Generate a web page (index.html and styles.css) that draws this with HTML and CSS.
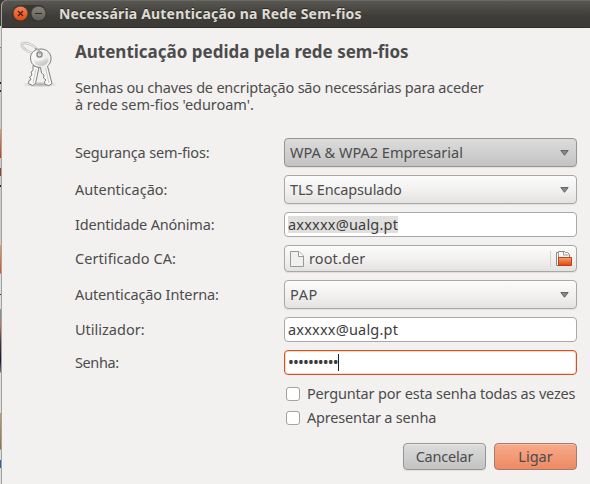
FILE: index.html
```html
<!DOCTYPE html>
<html lang="pt">
<head>
<meta charset="utf-8">
<title>Necessária Autenticação na Rede Sem-fios</title>
<link rel="stylesheet" href="styles.css">
</head>
<body>
<div class="desktop">
  <div class="behind"></div>
  <div class="window">
    <header class="titlebar">
      <div class="controls">
        <svg class="ctl" viewBox="0 0 15 15"><defs><linearGradient id="cl" x2="0" y2="1"><stop offset="0" stop-color="#f58457"/><stop offset="1" stop-color="#de4a12"/></linearGradient></defs><circle cx="7.5" cy="7.5" r="7.3" fill="url(#cl)" stroke="#35332e" stroke-width=".5"/><path d="M5 5l5 5M10 5l-5 5" stroke="#4a1d0c" stroke-width="1.2"/></svg>
        <svg class="ctl" viewBox="0 0 15 15"><defs><linearGradient id="mn" x2="0" y2="1"><stop offset="0" stop-color="#86847b"/><stop offset="1" stop-color="#625f57"/></linearGradient></defs><circle cx="7.5" cy="7.5" r="7.3" fill="url(#mn)" stroke="#35332e" stroke-width=".5"/><path d="M4 7.5h7" stroke="#302e29"/></svg>
      </div>
      <span class="title">Necessária Autenticação na Rede Sem-fios</span>
    </header>
    <main class="content">
      <svg class="keys" viewBox="0 0 48 48">
        <defs>
          <linearGradient id="metal" x2="1" y2="1"><stop offset="0" stop-color="#fff"/><stop offset=".5" stop-color="#ececea"/><stop offset="1" stop-color="#fff"/></linearGradient>
          <linearGradient id="face" x2="1" y2="1"><stop offset="0" stop-color="#f0f0ef"/><stop offset="1" stop-color="#bcbdbb"/></linearGradient>
          <radialGradient id="shade"><stop offset="0" stop-color="#aaa"/><stop offset="1" stop-color="#aaa" stop-opacity="0"/></radialGradient>
        </defs>
        <ellipse cx="23" cy="43.500" rx="18" ry="3" fill="url(#shade)"/>
        <ellipse cx="12.500" cy="7" rx="8.500" ry="3.600" transform="rotate(27 12.500 7)" fill="none" stroke="#b5b7b1" stroke-width="2.400"/>
        <ellipse cx="12.500" cy="7" rx="8.500" ry="3.600" transform="rotate(27 12.500 7)" fill="none" stroke="#f4f4f1" stroke-width="1"/>
        <path d="M16 24.500l6 2-3.500 16-3 2-4-2 .500-3 2-1-1.500-2.500 2.500-2-1-3 2-1.500z" fill="#f9f9f8" stroke="#80827e"/>
        <path d="M19 28l-3 14" stroke="#c9cac8"/>
        <path d="M24 8c6 0 10 4 10 9.500 0 3.500-1.500 6-3.500 7.500l4.500 17.500-3 2-4-1-.500-3 1.500-1.500-2.500-2 .500-3-2.500-2-1-5.500c-6 0-10-4-10-9.500s4.500-9 10.500-9z" fill="url(#metal)" stroke="#80827e"/>
        <path d="M16.500 19c5 2.500 10 1 14-2l1 3c-2 4-5 5.500-8.500 5-3.500-.5-5.500-2.500-6.500-6z" fill="url(#face)"/>
        <path d="M28.500 27l3.500 15" stroke="#c9cac8"/>
        <circle cx="22.500" cy="13.500" r="2.600" fill="#d9d9d7" stroke="#80827e" stroke-width="1.200"/>
        <path d="M18 7.500c3.500.5 5 2.500 5 5.500" fill="none" stroke="#a9aba5" stroke-width="1.600"/>
      </svg>
      <section class="details">
        <h1>Autenticação pedida pela rede sem-fios</h1>
        <p class="intro"><span class="t-intro1">Senhas ou chaves de encriptação são necessárias para aceder</span> <span class="t-intro2">à rede sem-fios 'eduroam'.</span></p>
        <div class="form">
          <div class="row tall"><label class="t-seg">Segurança sem-fios:</label><div class="combo active"><span>WPA &amp; WPA2 Empresarial</span><svg class="arrow" viewBox="0 0 9 6"><path d="M.8.500h7.400L4.500 5.300z" fill="#878787" stroke="#666"/></svg></div></div>
          <div class="row tall"><label>Autenticação:</label><div class="combo"><span class="t-tls">TLS Encapsulado</span><svg class="arrow" viewBox="0 0 9 6"><path d="M.8.500h7.400L4.500 5.300z" fill="#878787" stroke="#666"/></svg></div></div>
          <div class="row"><label class="t-ide">Identidade Anónima:</label><div class="entry"><span class="selected t-mail">axxxxx@ualg.pt</span></div></div>
          <div class="row file"><label class="t-cer">Certificado CA:</label><div class="combo chooser">
            <svg class="page" viewBox="0 0 14 16"><path d="M.500.500h8.500l4.500 4.500v10.500h-13z" fill="#f0f0ef" stroke="#999"/><path d="M8.500.500v5h5" fill="#fff" stroke="#999"/></svg>
            <span class="t-root">root.der</span>
            <span class="browse"><svg class="folder" viewBox="0 0 16 16"><defs><linearGradient id="fo" x2="0" y2="1"><stop offset="0" stop-color="#f3a574"/><stop offset=".45" stop-color="#ec7940"/><stop offset="1" stop-color="#d94410"/></linearGradient></defs><path d="M.500 14.500v-13h2v-1h6l1 1h2l2 2v11z" fill="#fafafa" stroke="#888"/><path d="M2.500 7v-6M7.500 1v3h5" fill="none" stroke="#999"/><path d="M2.500 6.500h13v8h-13z" fill="url(#fo)" stroke="#c63d13"/></svg></span>
          </div></div>
          <div class="row tall"><label class="t-int">Autenticação Interna:</label><div class="combo"><span class="t-pap">PAP</span><svg class="arrow" viewBox="0 0 9 6"><path d="M.8.500h7.400L4.500 5.300z" fill="#878787" stroke="#666"/></svg></div></div>
          <div class="row"><label>Utilizador:</label><div class="entry"><span class="t-mail">axxxxx@ualg.pt</span></div></div>
          <div class="row"><label class="t-sen">Senha:</label><div class="entry focus"><span class="dots">••••••••••</span><i class="caret"></i></div></div>
        </div>
        <div class="checks">
          <label class="check"><i class="box"></i><span class="t-per">Perguntar por esta senha todas as vezes</span></label>
          <label class="check"><i class="box"></i><span class="t-per">Apresentar a senha</span></label>
        </div>
        <div class="actions"><button class="btn"><span class="t-can">Cancelar</span></button><button class="btn primary"><span>Ligar</span></button></div>
      </section>
    </main>
  </div>
</div>
</body>
</html>
```
FILE: styles.css
```css
* { box-sizing: border-box; }
body { margin: 0; width: 590px; height: 484px; overflow: hidden; font: 14.5px/17px "Noto Sans", sans-serif; color: #4c4c4c; }
.desktop { display: flex; height: 484px; background: linear-gradient(#3c3b37 0 26px, #d5d5d5 26px); }
.behind { width: 1px; background: linear-gradient(#3c3b37 0 26px, #ddd 26px 47px, #d65f37 47px 48px, #ccc 48px 82px, #222 82px 84px, #ccc 84px 90px, #333 90px 92px, #ccc 92px 129px, #d9a16d 129px, #c63d13 158px, #ccc 158px 168px, #8e4534 168px 176px, #ccc 176px 185px, #222 185px 187px, #ccc 187px 245px, #d9a16d 245px, #d65325 273px, #ddd 274px 294px, #512332 294px 295px, #ddd 295px 309px, #65a4a0 309px, #b77b5d 325px, #553b4b 340px, #101b30 360px, #826f60 372px, #ddd 373px 413px, #c49b6a 413px, #8a7447 449px, #ddd 450px 460px, #2866b0 460px 468px, #ddd 468px); }
.window { flex: 1; display: flex; flex-direction: column; border-left: 1px solid #a3a2a0; background: #f2f1f0; border-top-left-radius: 6px; overflow: hidden; }
.titlebar { height: 28px; margin-left: -1px; padding-left: 11px; display: flex; align-items: center; gap: 12px; background: linear-gradient(#6a6963 0 1px, #585751 1px, #3e3d39 16px, #3b3a36 27px, #302f2c 27px); color: #dfdbd2; }
.controls { display: flex; gap: 3px; height: 17px; padding: 1px; margin-top: -1px; border-radius: 9px; background: #393833; }
.ctl { width: 15px; height: 15px; }
.title { margin-bottom: 2px; font-size: 14px; font-weight: 700; letter-spacing: .18px; text-shadow: 0 -1px #2c2b28; }
.content { display: flex; padding: 12px 13px 0 15px; }
.keys { width: 48px; height: 48px; margin: 1px 10px 0 0; }
.details { width: 502px; }
h1 { margin: 1px 0 0; font-size: 17px; line-height: 22px; font-weight: 700; }
.intro { margin: 16px 0 25px; }
.intro span { display: block; white-space: nowrap; }
.form { display: flex; flex-direction: column; gap: 8px; }
.row { display: grid; grid-template-columns: 209px 293px; align-items: center; height: 25px; }
.tall { height: 29px; }
.file { height: 27px; }
.row label { justify-self: start; white-space: nowrap; }
.combo, .entry { height: 100%; display: flex; align-items: center; border: 1px solid #a9a8a6; border-radius: 4px; white-space: nowrap; }
.combo { padding: 0 7px 0 5px; background: linear-gradient(#fcfcfc, #f0efee 60%, #e3e2e1); box-shadow: 0 1px 1px #e0dfdd; }
.combo.active { background: linear-gradient(#dcdcdc, #c3c3c3); border-color: #959595; }
.arrow { width: 9px; height: 6px; margin-left: auto; }
.entry { padding-left: 3px; background: #fff; color: #3c3c3c; }
.entry.focus { border: 1px solid #d5511f; box-shadow: inset 0 0 0 1px #f9d9cc; }
.selected { background: #e0dfde; }
.chooser { padding: 0 4px 0 5px; }
.page { width: 14px; height: 16px; margin-right: 5px; }
.browse { display: flex; margin-left: auto; padding-left: 5px; border-left: 1px solid #d5d4d3; }
.folder { width: 16px; height: 16px; }
.dots { font-size: 15.500px; letter-spacing: -.85px; }
.caret { width: 1px; height: 17px; background: #222; }
.checks { display: flex; flex-direction: column; gap: 7px; margin: 10px 0 0 211px; }
.check { display: flex; align-items: center; gap: 7px; white-space: nowrap; }
.box { flex: none; width: 14px; height: 14px; border: 1px solid #a3a2a0; border-radius: 3px; background: #fff; }
.actions { display: flex; justify-content: flex-end; gap: 8px; margin-top: 17px; }
.btn { width: 83px; height: 27px; padding: 0; font: inherit; color: #4c4c4c; border: 1px solid #969696; border-radius: 4px; background: linear-gradient(#dcdcdc, #c3c3c3); box-shadow: 0 1px 1px #e0dfdd, inset 0 1px #e8e8e8; }
.btn.primary { border-color: #a37c6c; background: linear-gradient(#f7aa8b, #ee8a63); box-shadow: inset 0 1px #fabfa7; }

/* Tracking for individual strings */
.t-intro1 { letter-spacing: -.21px; }
.t-intro2 { letter-spacing: -.04px; }
.t-seg, .t-tls { letter-spacing: -.15px; }
.t-ide { letter-spacing: -.2px; }
.t-cer { letter-spacing: .07px; }
.t-int { letter-spacing: -.13px; }
.t-sen { letter-spacing: -.4px; }
.t-mail { letter-spacing: .2px; }
.t-root { letter-spacing: .12px; }
.t-pap { letter-spacing: .6px; }
.t-per { letter-spacing: -.18px; }
.t-can { letter-spacing: -.2px; }
```
